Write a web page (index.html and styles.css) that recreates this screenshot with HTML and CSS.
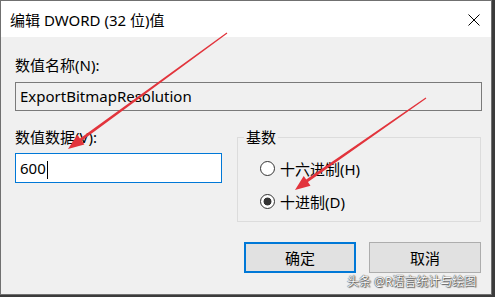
FILE: index.html
```html
<!DOCTYPE html>
<html lang="zh-CN">

<head>
    <meta charset="UTF-8">
    <meta name="viewport" content="width=device-width, initial-scale=1.0">
    <title>编辑 DWORD (32 位)值</title>
    <link rel="stylesheet" href="styles.css">
</head>

<body>
    <div class="window">
        <div class="titlebar">
            <span class="title">编辑 DWORD (32 位)值</span>
            <svg class="close" width="12" height="12" viewBox="0 0 12 12">
                <path d="M0.5 0.5L11.5 11.5M11.5 0.5L0.5 11.5" stroke="#000" stroke-width="1" fill="none" />
            </svg>
        </div>

        <div class="content">
            <div class="label">数值名称(N):</div>
            <div class="field readonly">ExportBitmapResolution</div>

            <div class="row">
                <div class="col">
                    <div class="label">数值数据(V):</div>
                    <div class="field active">600<span class="caret"></span></div>
                </div>

                <fieldset class="group">
                    <legend>基数</legend>
                    <div class="radio"><span class="dot"></span>十六进制(H)</div>
                    <div class="radio checked"><span class="dot"></span>十进制(D)</div>
                </fieldset>
            </div>

            <div class="buttons">
                <div class="btn default">确定</div>
                <div class="btn">取消</div>
            </div>
        </div>
    </div>

    <!-- красные стрелки поверх окна -->
    <svg class="arrows" width="495" height="297" viewBox="0 0 495 297">
        <path d="M227.35 33.48 L81.8 140.8 L84.4 144.4 L68 149 L77.4 134.8 L80 138.4 L226.65 32.52 Z" fill="#e2343c" />
        <path d="M426.34 98.49 L307.96 182.08 L310.5 185.8 L295 190 L303.7 175.9 L306.24 179.62 L425.66 97.51 Z" fill="#e2343c" />
    </svg>

    <div class="watermark">头条 @R语言统计与绘图</div>
</body>

</html>
```

FILE: styles.css
```css
* {
    box-sizing: border-box;
}

body {
    margin: 0;
    width: 495px;
    height: 297px;
    overflow: hidden;
    position: relative;
    background-color: #3b3b3b;
    font-family: "Noto Sans", "Noto Sans CJK SC", sans-serif;
    color: #000;
}

.window {
    width: 492px;
    height: 295px;
    border: 1px solid #707070;
    background-color: #f0f0f0;
}

.titlebar {
    height: 36px;
    display: flex;
    align-items: center;
    justify-content: space-between;
    padding: 1px 11px 0 9px;
    background-color: #fff;
}

.title {
    font-size: 15px;
    line-height: 20px;
}

.content {
    padding: 18px 9px 0 14px;
}

.label {
    font-size: 15px;
    line-height: 20px;
}

.field {
    height: 29px;
    margin-top: 7px;
    padding: 0 4px;
    border: 1px solid #7a7a7a;
    font-size: 15px;
    line-height: 27px;
}

.readonly {
    background-color: #f0f0f0;
}

.row {
    display: flex;
    align-items: flex-start;
    gap: 15px;
    margin-top: 16px;
    margin-right: 1px;
}

.col {
    width: 207px;
}

.active {
    height: 30px;
    margin-top: 6px;
    border-color: #0078d7;
    background-color: #fff;
    line-height: 28px;
}

.caret {
    display: inline-block;
    width: 1px;
    height: 18px;
    margin-left: 1px;
    vertical-align: middle;
    background-color: #000;
}

.group {
    width: 244px;
    min-width: 0;
    margin: 0;
    padding: 0 0 10px 0;
    border: 1px solid #dcdcdc;
}

.group legend {
    margin-left: 6px;
    padding: 0 2px;
    font-size: 15px;
    line-height: 20px;
}

.radio {
    display: flex;
    align-items: center;
    gap: 5px;
    height: 20px;
    margin-top: 11px;
    margin-left: 22px;
    font-size: 15px;
}

.radio + .radio {
    margin-top: 13px;
}

.dot {
    width: 15px;
    height: 15px;
    border: 1px solid #333;
    border-radius: 50%;
    background-color: #fff;
}

.checked .dot {
    background: radial-gradient(circle, #333 0 3.6px, #fff 4.3px);
}

.buttons {
    display: flex;
    justify-content: flex-end;
    gap: 13px;
    margin-top: 20px;
    margin-right: 1px;
}

.btn {
    width: 112px;
    height: 31px;
    display: flex;
    align-items: center;
    justify-content: center;
    border: 1px solid #adadad;
    background-color: #e1e1e1;
    font-size: 15px;
}

.default {
    border: 2px solid #0078d7;
}

.arrows {
    position: absolute;
    top: 0;
    left: 0;
    pointer-events: none;
}

.watermark {
    position: absolute;
    left: 347px;
    top: 274px;
    font-size: 12px;
    line-height: 15px;
    color: #fafafa;
    text-shadow: 0 0 1px #444, 0 0 1px #444, 1px 1px 1px #666;
}
```
